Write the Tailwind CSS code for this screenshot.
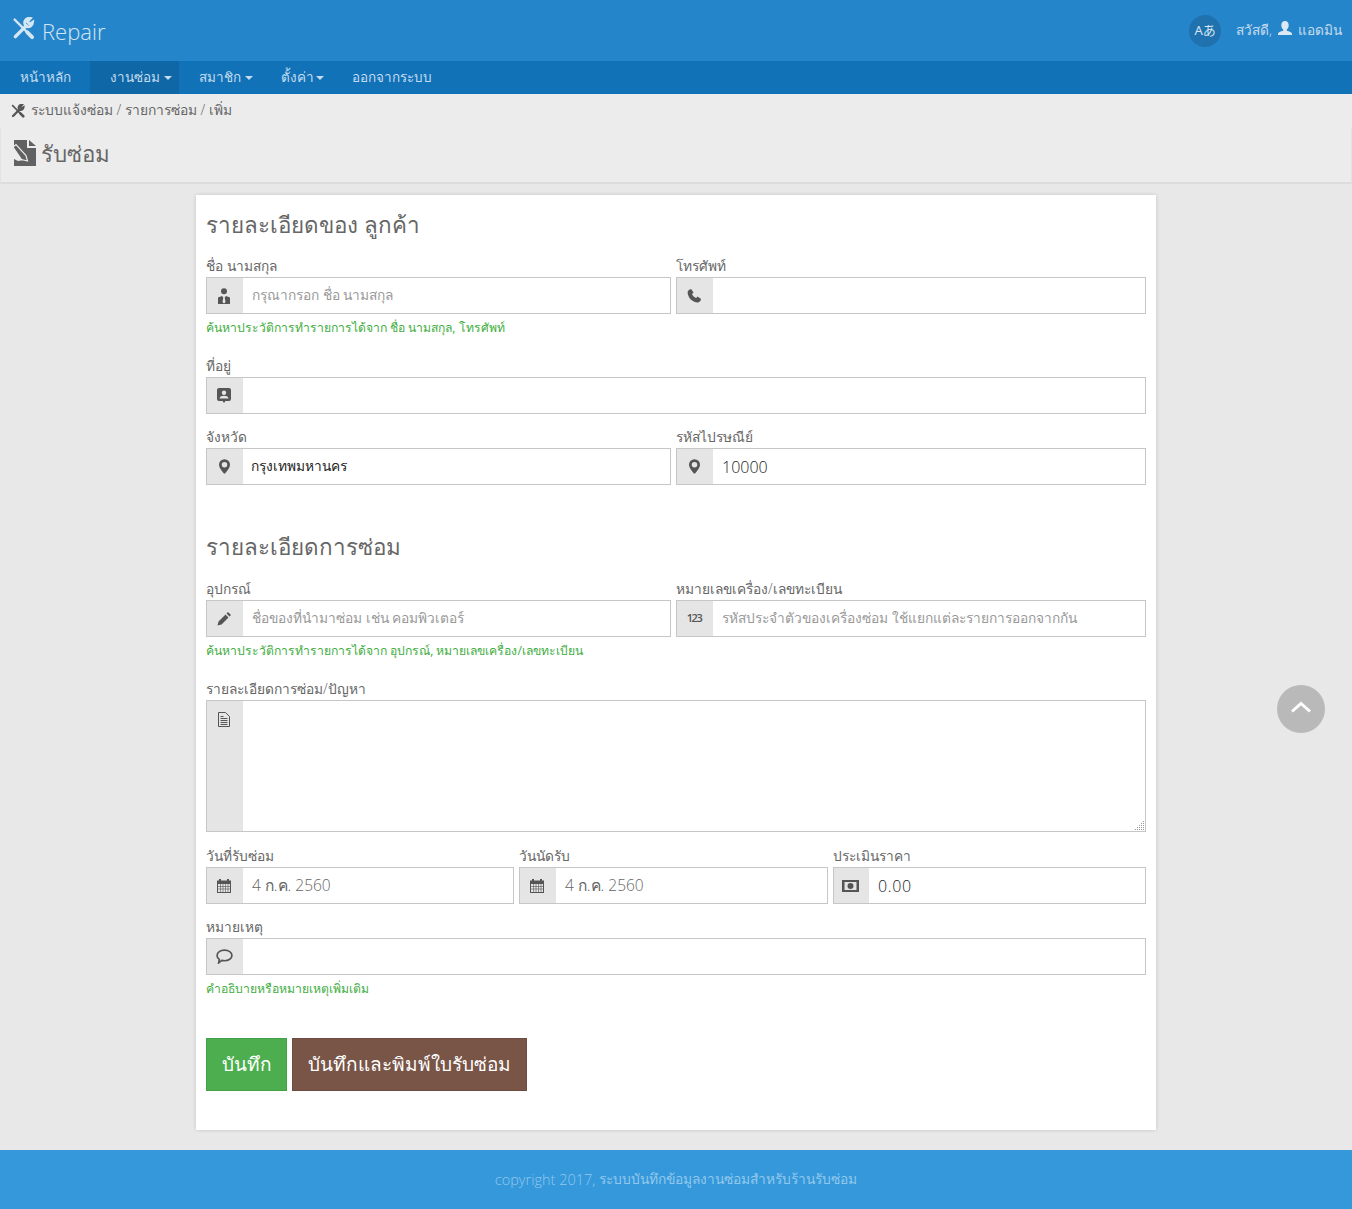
<!DOCTYPE html>
<html lang="th">
<head>
  <meta charset="UTF-8">
  <meta name="viewport" content="width=device-width, initial-scale=1">
  <title>Repair</title>
  <script src="https://cdn.jsdelivr.net/npm/@tailwindcss/browser@4"></script>
</head>
<body class="bg-[#e8e8e8] font-['Open_Sans','Noto_Sans',sans-serif] font-light text-[#666]">

  <!-- Top bar -->
  <header class="h-[61px] bg-[#2585ca] flex items-center justify-between pl-[12px] pr-[10px]">
    <div class="flex items-center gap-[7px] text-[#d5e6f3]">
      <svg class="w-[23px] h-[23px] -mt-[4px]" viewBox="0 0 24 24" fill="none" stroke="currentColor"><path stroke-width="2.400" d="M2 2l17 17"/><path stroke-width="4" stroke-linecap="round" d="M16 16l5 5"/><path stroke-width="3.600" stroke-linecap="round" d="M3.500 20.500 15 9"/><path stroke-width="3" d="M21.500 5.500a5 5 0 0 1-6.500 4.500 5 5 0 0 1-1-6.500 5 5 0 0 1 5-2l-3 3.500 2.500 2.500z"/></svg>
      <span class="text-[22px] leading-none">Repair</span>
    </div>
    <div class="flex items-center text-[#c5dcee] text-[13.7px]">
      <span class="w-[32px] h-[32px] rounded-full bg-[#1f72ae] flex items-center justify-center text-[#d5e6f3] text-[13px] font-normal font-['Noto_Sans','Noto_Sans_CJK_JP',sans-serif] mr-[15px]">Aあ</span>
      <span>สวัสดี,</span>
      <svg class="w-[16px] h-[16px] mx-[5px] -mt-[4px]" viewBox="0 0 16 16" fill="#dbe9f4"><path d="M8 0c2.300 0 3.700 1.800 3.700 4.200 0 1.700-.8 3.300-1.900 4.200v1.300c2.500.6 5.200 1.500 5.200 3.100V14H1v-1.200c0-1.600 2.700-2.500 5.200-3.100V8.400C5.100 7.500 4.300 5.900 4.300 4.200 4.300 1.800 5.700 0 8 0z"/></svg>
      <span>แอดมิน</span>
    </div>
  </header>

  <!-- Menu -->
  <nav class="h-[33px] bg-[#1172b8] flex items-stretch text-[#c5dcee] text-[13.5px]">
    <a class="w-[90px] pl-[20px] flex items-center">หน้าหลัก</a>
    <a class="w-[89px] pl-[20px] flex items-center bg-[#0f67a6]">งานซ่อม<i class="ml-[4px] border-x-[4px] border-x-transparent border-t-[4px] border-t-[#c5dcee]"></i></a>
    <a class="w-[82px] pl-[20px] flex items-center">สมาชิก<i class="ml-[4px] border-x-[4px] border-x-transparent border-t-[4px] border-t-[#c5dcee]"></i></a>
    <a class="w-[72px] pl-[20px] flex items-center">ตั้งค่า<i class="ml-[2px] border-x-[4px] border-x-transparent border-t-[4px] border-t-[#c5dcee]"></i></a>
    <a class="pl-[20px] -ml-[1px] flex items-center">ออกจากระบบ</a>
  </nav>

  <!-- Breadcrumbs and page title -->
  <div class="bg-[#ececec] text-[#666]">
    <div class="h-[33px] pl-[11px] flex items-center gap-[6px] text-[13.85px]">
      <svg class="w-[14px] h-[14px]" viewBox="0 0 24 24" fill="none" stroke="#555"><path stroke-width="2.800" d="M2 2l17 17"/><path stroke-width="4.500" stroke-linecap="round" d="M16 16l5 5"/><path stroke-width="4" stroke-linecap="round" d="M3.500 20.500 15 9"/><path stroke-width="3.500" d="M21.500 5.500a5 5 0 0 1-6.500 4.500 5 5 0 0 1-1-6.500 5 5 0 0 1 5-2l-3 3.500 2.500 2.500z"/></svg>
      <span>ระบบแจ้งซ่อม / รายการซ่อม / เพิ่ม</span>
    </div>
    <div class="h-[57px] pl-[9px] flex items-center gap-[4px] border-x border-[#e4e4e4] border-b-2 border-b-[#dcdcdc]">
      <svg class="w-[27px] h-[27px] mt-[-3px]" viewBox="0 0 27 27"><path fill="#616161" d="M4 0h13v8h9v18H4v-7l4 2 6-1-9-12-1 1zM19 0l7 6h-7z"/><path fill="#616161" stroke="#ececec" stroke-width="1.200" d="M3 7l3-2.500 10 11 1.500 5.500-6-1.500z"/></svg>
      <span class="text-[22.3px] leading-none">รับซ่อม</span>
    </div>
  </div>

  <!-- Form card -->
  <main class="w-[960px] ml-[196px] mt-[11px] bg-white shadow-[0_0_4px_rgba(0,0,0,0.15)] px-[10px] pt-[13px] pb-[39px] text-[13.75px]">
    <h2 class="text-[22.4px] leading-[33px]">รายละเอียดของ ลูกค้า</h2>

    <div class="grid grid-cols-[465px_470px] gap-x-[5px] mt-[15px]">
      <div>
        <label class="block h-[21px] leading-[19px]">ชื่อ นามสกุล</label>
        <div class="flex h-[37px] border border-[#c6c6c6]">
          <span class="w-[36px] pr-[2px] bg-[#e5e5e5] flex items-center justify-center">
            <svg class="w-[14px] h-[16px]" viewBox="0 0 14 16" fill="#555"><circle cx="7" cy="3.200" r="3"/><path d="M1 16V9.500L5 8l1.300 1.500L5.500 14 7 15.500 8.500 14l-.8-4.500L9 8l4 1.500V16z"/></svg>
          </span>
          <div class="flex-1 pl-[9px] flex items-center text-[#999]">กรุณากรอก ชื่อ นามสกุล</div>
        </div>
      </div>
      <div>
        <label class="block h-[21px] leading-[19px]">โทรศัพท์</label>
        <div class="flex h-[37px] border border-[#c6c6c6]">
          <span class="w-[36px] pr-[2px] bg-[#e5e5e5] flex items-center justify-center">
            <svg class="w-[15px] h-[15px]" viewBox="0 0 24 24" fill="#555"><path d="M6.600 1.500 10.500 7 8 9.500c1.300 2.800 3.700 5.200 6.500 6.500l2.500-2.500 5.500 3.900c-.6 3.200-3 5.600-5.500 5.600C8.500 22.500 1.500 15.500 1 7c0-2.500 2.400-4.900 5.600-5.500z"/></svg>
          </span>
          <div class="flex-1"></div>
        </div>
      </div>
    </div>
    <p class="h-[28px] leading-[28px] text-[12.2px] font-normal text-[#3fae3f]">ค้นหาประวัติการทำรายการได้จาก ชื่อ นามสกุล, โทรศัพท์</p>

    <div class="mt-[14px]">
      <label class="block h-[21px] leading-[19px]">ที่อยู่</label>
      <div class="flex h-[37px] border border-[#c6c6c6]">
        <span class="w-[36px] pr-[2px] bg-[#e5e5e5] flex items-center justify-center">
          <svg class="w-[14px] h-[15px]" viewBox="0 0 14 15" fill="#555"><path d="M2 0h10a2 2 0 0 1 2 2v9a2 2 0 0 1-2 2H8.500L7 15l-1.500-2H2a2 2 0 0 1-2-2V2a2 2 0 0 1 2-2zm5 2.500a2.200 2.200 0 1 0 0 4.400 2.200 2.200 0 0 0 0-4.400zM2.500 10.500h9C11.500 8.500 9 7.800 7 7.800s-4.500.7-4.500 2.700z" fill-rule="evenodd"/></svg>
        </span>
        <div class="flex-1"></div>
      </div>
    </div>

    <div class="grid grid-cols-[465px_470px] gap-x-[5px] mt-[13px]">
      <div>
        <label class="block h-[21px] leading-[19px]">จังหวัด</label>
        <div class="flex h-[37px] border border-[#c6c6c6]">
          <span class="w-[36px] pr-[2px] bg-[#e5e5e5] flex items-center justify-center">
            <svg class="w-[11px] h-[15px]" viewBox="0 0 12 16" fill="#555"><path d="M6 0a6 6 0 0 1 6 6c0 3.500-4 8-6 10C4 14 0 9.500 0 6a6 6 0 0 1 6-6zm0 3a3 3 0 1 0 0 6 3 3 0 0 0 0-6z" fill-rule="evenodd"/></svg>
          </span>
          <div class="flex-1 pl-[8px] flex items-center text-[#222] font-normal">กรุงเทพมหานคร</div>
        </div>
      </div>
      <div>
        <label class="block h-[21px] leading-[19px]">รหัสไปรษณีย์</label>
        <div class="flex h-[37px] border border-[#c6c6c6]">
          <span class="w-[36px] pr-[2px] bg-[#e5e5e5] flex items-center justify-center">
            <svg class="w-[11px] h-[15px]" viewBox="0 0 12 16" fill="#555"><path d="M6 0a6 6 0 0 1 6 6c0 3.500-4 8-6 10C4 14 0 9.500 0 6a6 6 0 0 1 6-6zm0 3a3 3 0 1 0 0 6 3 3 0 0 0 0-6z" fill-rule="evenodd"/></svg>
          </span>
          <div class="flex-1 pl-[9px] flex items-center text-[#222] text-[16px]">10000</div>
        </div>
      </div>
    </div>

    <h2 class="text-[22.4px] leading-[33px] mt-[45px]">รายละเอียดการซ่อม</h2>

    <div class="grid grid-cols-[465px_470px] gap-x-[5px] mt-[16px]">
      <div>
        <label class="block h-[21px] leading-[19px]">อุปกรณ์</label>
        <div class="flex h-[37px] border border-[#c6c6c6]">
          <span class="w-[36px] pr-[2px] bg-[#e5e5e5] flex items-center justify-center">
            <svg class="w-[15px] h-[15px]" viewBox="0 0 15 15" fill="#555"><path d="M11 1l3 3-1.500 1.500-3-3zM8.500 3.500l3 3L4.500 13.500l-4 1 1-4z"/></svg>
          </span>
          <div class="flex-1 pl-[9px] flex items-center text-[#999]">ชื่อของที่นำมาซ่อม เช่น คอมพิวเตอร์</div>
        </div>
      </div>
      <div>
        <label class="block h-[21px] leading-[19px]">หมายเลขเครื่อง/เลขทะเบียน</label>
        <div class="flex h-[37px] border border-[#c6c6c6]">
          <span class="w-[36px] pr-[2px] bg-[#e5e5e5] flex items-center justify-center text-[11px] font-semibold tracking-[-1.5px] text-[#555]">123</span>
          <div class="flex-1 pl-[9px] flex items-center text-[#999]">รหัสประจำตัวของเครื่องซ่อม ใช้แยกแต่ละรายการออกจากกัน</div>
        </div>
      </div>
    </div>
    <p class="h-[28px] leading-[28px] text-[12.2px] font-normal text-[#3fae3f]">ค้นหาประวัติการทำรายการได้จาก อุปกรณ์, หมายเลขเครื่อง/เลขทะเบียน</p>

    <div class="mt-[14px]">
      <label class="block h-[21px] leading-[19px]">รายละเอียดการซ่อม/ปัญหา</label>
      <div class="flex h-[132px] border border-[#c6c6c6] relative">
        <span class="w-[36px] pr-[2px] bg-[#e5e5e5] flex justify-center pt-[11px]">
          <svg class="w-[14px] h-[15px]" viewBox="0 0 14 15" fill="none" stroke="#555"><path d="M1.500.5h7l4 4v10h-11zM3.500 6.500h7M3.500 8.500h7M3.500 10.500h7M3.500 12.500h7M3.500 4.500h3"/></svg>
        </span>
        <div class="flex-1"></div>
        <svg class="absolute right-0 bottom-0 w-[11px] h-[11px]" viewBox="0 0 11 11" fill="#999"><path d="M9 1h1v1H9zM7 3h1v1H7zM9 3h1v1H9zM5 5h1v1H5zM7 5h1v1H7zM9 5h1v1H9zM3 7h1v1H3zM5 7h1v1H5zM7 7h1v1H7zM9 7h1v1H9zM1 9h1v1H1zM3 9h1v1H3zM5 9h1v1H5zM7 9h1v1H7zM9 9h1v1H9z"/></svg>
      </div>
    </div>

    <div class="grid grid-cols-[308px_309px_313px] gap-x-[5px] mt-[14px]">
      <div>
        <label class="block h-[21px] leading-[19px]">วันที่รับซ่อม</label>
        <div class="flex h-[37px] border border-[#c6c6c6]">
          <span class="w-[36px] pr-[2px] bg-[#e5e5e5] flex items-center justify-center">
            <svg class="w-[16px] h-[16px]" viewBox="0 0 16 16" fill="#555"><path d="M1 2.500h2V1h2v1.500h6V1h2v1.500h2V15H1zM2 6v8h12V6z" fill-rule="evenodd"/><path stroke="#555" stroke-width=".6" d="M4.500 6v8M7 6v8M9.500 6v8M12 6v8M2 8.500h12M2 11h12"/></svg>
          </span>
          <div class="flex-1 pl-[9px] flex items-center text-[15.5px]">4 ก.ค. 2560</div>
        </div>
      </div>
      <div>
        <label class="block h-[21px] leading-[19px]">วันนัดรับ</label>
        <div class="flex h-[37px] border border-[#c6c6c6]">
          <span class="w-[36px] pr-[2px] bg-[#e5e5e5] flex items-center justify-center">
            <svg class="w-[16px] h-[16px]" viewBox="0 0 16 16" fill="#555"><path d="M1 2.500h2V1h2v1.500h6V1h2v1.500h2V15H1zM2 6v8h12V6z" fill-rule="evenodd"/><path stroke="#555" stroke-width=".6" d="M4.500 6v8M7 6v8M9.500 6v8M12 6v8M2 8.500h12M2 11h12"/></svg>
          </span>
          <div class="flex-1 pl-[9px] flex items-center text-[15.5px]">4 ก.ค. 2560</div>
        </div>
      </div>
      <div>
        <label class="block h-[21px] leading-[19px]">ประเมินราคา</label>
        <div class="flex h-[37px] border border-[#c6c6c6]">
          <span class="w-[35px] pr-[2px] bg-[#e5e5e5] flex items-center justify-center">
            <svg class="w-[17px] h-[12px]" viewBox="0 0 17 12" fill="#555"><path d="M0 0h17v12H0zM2.500 2v8h12V2zM8.500 3a3 3 0 1 1 0 6 3 3 0 0 1 0-6z" fill-rule="evenodd"/></svg>
          </span>
          <div class="flex-1 pl-[9px] flex items-center text-[#222] text-[16px] tracking-[0.6px]">0.00</div>
        </div>
      </div>
    </div>

    <div class="mt-[13px]">
      <label class="block h-[21px] leading-[19px]">หมายเหตุ</label>
      <div class="flex h-[37px] border border-[#c6c6c6]">
        <span class="w-[36px] pr-[2px] bg-[#e5e5e5] flex items-center justify-center">
          <svg class="w-[17px] h-[15px]" viewBox="0 0 16 14" fill="none" stroke="#555" stroke-width="1.600"><path d="M8 1c3.800 0 7 2 7 5s-3.200 5-7 5c-.9 0-1.700-.1-2.500-.3L2.500 13l.6-3.300C1.800 8.800 1 7.500 1 6c0-3 3.200-5 7-5z"/></svg>
        </span>
        <div class="flex-1"></div>
      </div>
    </div>
    <p class="h-[28px] leading-[28px] text-[12.2px] font-normal text-[#3fae3f]">คำอธิบายหรือหมายเหตุเพิ่มเติม</p>

    <div class="flex gap-[5px] mt-[35px]">
      <button class="h-[53px] w-[81px] bg-[#4cae4f] border border-[#46a049] text-white text-[19px]">บันทึก</button>
      <button class="h-[53px] w-[235px] bg-[#795548] border border-[#6d4c41] text-white text-[19px]">บันทึกและพิมพ์ใบรับซ่อม</button>
    </div>
  </main>

  <footer class="mt-[20px] h-[59px] bg-[#3498db] flex items-center justify-center text-[13.8px] text-[#93c8ec]">
    <span class="text-[14.5px]">copyright 2017,&nbsp;</span>ระบบบันทึกข้อมูลงานซ่อมสำหรับร้านรับซ่อม
  </footer>

  <!-- Back to top, lies over the page -->
  <a class="absolute left-[1277px] top-[685px] w-[48px] h-[48px] rounded-full bg-[#b9b9b9] flex items-center justify-center">
    <svg class="w-[20px] h-[12px] -mt-[4px]" viewBox="0 0 20 12" fill="none" stroke="#fff" stroke-width="3"><path d="M1 10.500l9-8 9 8"/></svg>
  </a>

</body>
</html>
